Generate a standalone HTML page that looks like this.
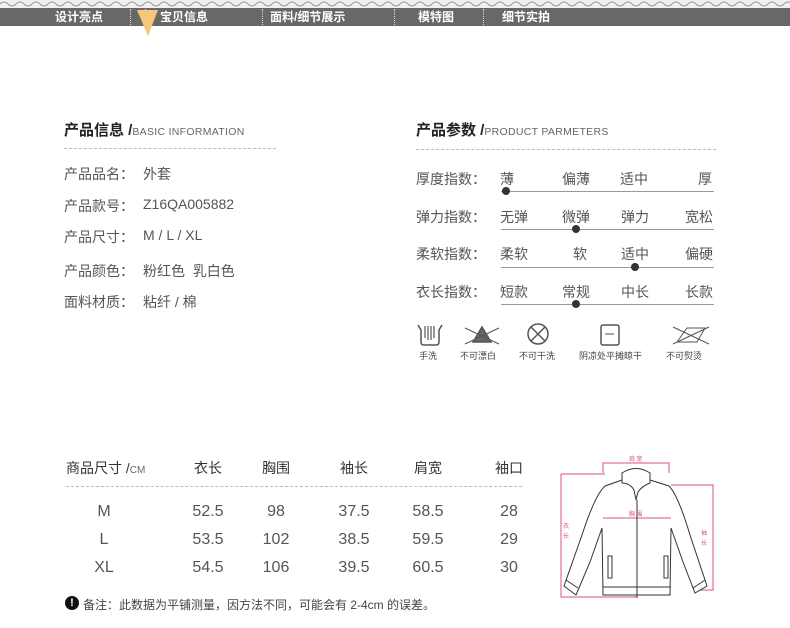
<!DOCTYPE html>
<html><head><meta charset="utf-8"><style>
*{margin:0;padding:0;box-sizing:border-box}
body{width:790px;height:628px;background:#fff;position:relative;overflow:hidden;font-family:"Liberation Sans","Noto Sans CJK SC",sans-serif;color:#555}
.a{position:absolute;white-space:nowrap}
.nav{position:absolute;top:8px;left:0;width:790px;height:18px;background:#686868}
.nav span{position:absolute;top:1px;color:#fff;font-size:12px;font-weight:bold;line-height:16px}
.sep{position:absolute;top:9px;width:0;height:16px;border-left:1px dotted #ddd}
.h{font-size:15px;font-weight:bold;color:#222}
.h small{font-size:10.5px;font-weight:normal;color:#666;letter-spacing:.3px}
.dash{position:absolute;height:0;border-top:1px dashed #bbb}
.r{font-size:14px;color:#555}
.pl{position:absolute;height:1px;background:#999}
.dot{position:absolute;width:8px;height:8px;border-radius:50%;background:#333}
.ic{font-size:9px;color:#444}
.t{font-size:14px;color:#333;text-align:center;width:60px}
.d{font-size:16px;color:#555;text-align:center;width:60px}
</style></head><body>
<svg class="a" style="left:0;top:0" width="790" height="8"><rect width="790" height="8" fill="#f0f0f0"/><g fill="none" stroke="#999" stroke-width="1"><path d="M0 4 Q4 0 8 4 T16 4 T24 4 T32 4 T40 4 T48 4 T56 4 T64 4 T72 4 T80 4 T88 4 T96 4 T104 4 T112 4 T120 4 T128 4 T136 4 T144 4 T152 4 T160 4 T168 4 T176 4 T184 4 T192 4 T200 4 T208 4 T216 4 T224 4 T232 4 T240 4 T248 4 T256 4 T264 4 T272 4 T280 4 T288 4 T296 4 T304 4 T312 4 T320 4 T328 4 T336 4 T344 4 T352 4 T360 4 T368 4 T376 4 T384 4 T392 4 T400 4 T408 4 T416 4 T424 4 T432 4 T440 4 T448 4 T456 4 T464 4 T472 4 T480 4 T488 4 T496 4 T504 4 T512 4 T520 4 T528 4 T536 4 T544 4 T552 4 T560 4 T568 4 T576 4 T584 4 T592 4 T600 4 T608 4 T616 4 T624 4 T632 4 T640 4 T648 4 T656 4 T664 4 T672 4 T680 4 T688 4 T696 4 T704 4 T712 4 T720 4 T728 4 T736 4 T744 4 T752 4 T760 4 T768 4 T776 4 T784 4 T792 4"/></g></svg>
<div class="nav">
<span style="left:55px">设计亮点</span><span style="left:160px">宝贝信息</span><span style="left:270px">面料/细节展示</span><span style="left:418px">模特图</span><span style="left:502px">细节实拍</span>
</div>
<div class="sep" style="left:130px"></div><div class="sep" style="left:145px"></div><div class="sep" style="left:262px"></div><div class="sep" style="left:394px"></div><div class="sep" style="left:483px"></div>
<svg class="a" style="left:137px;top:10px" width="22" height="26"><polygon points="0,0 21,0 11,26" fill="#f5c77a"/></svg>

<div class="a h" style="left:64px;top:119px">产品信息 /<small>BASIC INFORMATION</small></div>
<div class="dash" style="left:64px;top:148px;width:212px"></div>
<div class="a r" style="left:64px;top:164px">产品品名：</div><div class="a r" style="left:143px;top:164px">外套</div>
<div class="a r" style="left:64px;top:196px">产品款号：</div><div class="a r" style="left:143px;top:196px">Z16QA005882</div>
<div class="a r" style="left:64px;top:227px">产品尺寸：</div><div class="a r" style="left:143px;top:227px">M / L / XL</div>
<div class="a r" style="left:64px;top:261px">产品颜色：</div><div class="a r" style="left:143px;top:261px">粉红色&nbsp;&nbsp;乳白色</div>
<div class="a r" style="left:64px;top:292px">面料材质：</div><div class="a r" style="left:143px;top:292px">粘纤 / 棉</div>

<div class="a h" style="left:416px;top:119px">产品参数 /<small>PRODUCT PARMETERS</small></div>
<div class="dash" style="left:416px;top:149px;width:300px"></div>
<div class="a r" style="left:416px;top:169px">厚度指数：</div>
<div class="a r" style="left:500px;top:169px">薄</div><div class="a r" style="left:562px;top:169px">偏薄</div><div class="a r" style="left:620px;top:169px">适中</div><div class="a r" style="left:698px;top:169px">厚</div>
<div class="pl" style="left:501px;top:191px;width:213px"></div><div class="dot" style="left:502px;top:187px"></div>
<div class="a r" style="left:416px;top:207px">弹力指数：</div>
<div class="a r" style="left:500px;top:207px">无弹</div><div class="a r" style="left:562px;top:207px">微弹</div><div class="a r" style="left:621px;top:207px">弹力</div><div class="a r" style="left:685px;top:207px">宽松</div>
<div class="pl" style="left:501px;top:229px;width:213px"></div><div class="dot" style="left:572px;top:225px"></div>
<div class="a r" style="left:416px;top:244px">柔软指数：</div>
<div class="a r" style="left:500px;top:244px">柔软</div><div class="a r" style="left:573px;top:244px">软</div><div class="a r" style="left:621px;top:244px">适中</div><div class="a r" style="left:685px;top:244px">偏硬</div>
<div class="pl" style="left:501px;top:267px;width:213px"></div><div class="dot" style="left:631px;top:263px"></div>
<div class="a r" style="left:416px;top:282px">衣长指数：</div>
<div class="a r" style="left:500px;top:282px">短款</div><div class="a r" style="left:562px;top:282px">常规</div><div class="a r" style="left:621px;top:282px">中长</div><div class="a r" style="left:685px;top:282px">长款</div>
<div class="pl" style="left:501px;top:304px;width:213px"></div><div class="dot" style="left:572px;top:300px"></div>

<svg class="a" style="left:415px;top:322px" width="300" height="26" fill="none" stroke="#555" stroke-width="1.5">
<path d="M3 3 L6 8 L6 20 Q6 23 9 23 L21 23 Q24 23 24 20 L24 8 L27 3"/><path d="M10 4 L10 16 M13 4 L13 18 M16 4 L16 18 M19 4 L19 16" stroke-width="1.2"/>
<path d="M58 20 L67 5 L76 20 Z" fill="#666"/><path d="M50 6 L84 22 M50 22 L84 6" stroke-width="1"/>
<circle cx="123" cy="12" r="10"/><path d="M116 5 L130 19 M130 5 L116 19"/>
<rect x="186" y="3" width="18" height="20" rx="2"/><path d="M190 12 L199 12" stroke-width="1"/>
<path d="M262 20 L272 6 L290 6 L282 20 Z" stroke-width="1"/><path d="M258 5 L294 22 M258 22 L294 5" stroke-width="1"/>
</svg>
<div class="a ic" style="left:419px;top:349px">手洗</div>
<div class="a ic" style="left:460px;top:349px">不可漂白</div>
<div class="a ic" style="left:519px;top:349px">不可干洗</div>
<div class="a ic" style="left:579px;top:349px">阴凉处平摊晾干</div>
<div class="a ic" style="left:666px;top:349px">不可熨烫</div>

<div class="a" style="left:66px;top:458px;font-size:14px;color:#333">商品尺寸 /<span style="font-size:10px;color:#666">CM</span></div>
<div class="a t" style="left:178px;top:458px">衣长</div><div class="a t" style="left:246px;top:458px">胸围</div><div class="a t" style="left:324px;top:458px">袖长</div><div class="a t" style="left:398px;top:458px">肩宽</div><div class="a t" style="left:479px;top:458px">袖口</div>
<div class="dash" style="left:66px;top:486px;width:456px"></div>
<div class="a d" style="left:74px;top:503px">M</div><div class="a d" style="left:178px;top:503px">52.5</div><div class="a d" style="left:246px;top:503px">98</div><div class="a d" style="left:324px;top:503px">37.5</div><div class="a d" style="left:398px;top:503px">58.5</div><div class="a d" style="left:479px;top:503px">28</div>
<div class="a d" style="left:74px;top:531px">L</div><div class="a d" style="left:178px;top:531px">53.5</div><div class="a d" style="left:246px;top:531px">102</div><div class="a d" style="left:324px;top:531px">38.5</div><div class="a d" style="left:398px;top:531px">59.5</div><div class="a d" style="left:479px;top:531px">29</div>
<div class="a d" style="left:74px;top:559px">XL</div><div class="a d" style="left:178px;top:559px">54.5</div><div class="a d" style="left:246px;top:559px">106</div><div class="a d" style="left:324px;top:559px">39.5</div><div class="a d" style="left:398px;top:559px">60.5</div><div class="a d" style="left:479px;top:559px">30</div>
<div class="a" style="left:65px;top:596px;width:14px;height:14px;border-radius:50%;background:#111;color:#fff;font-size:11px;font-weight:bold;text-align:center;line-height:14px">!</div>
<div class="a" style="left:83px;top:596px;font-size:12px;color:#444">备注：此数据为平铺测量，因方法不同，可能会有 2-4cm 的误差。</div>

<svg class="a" style="left:550px;top:440px" width="180" height="170" fill="none">
<g stroke="#d9557a" stroke-width="1"><path d="M53 33 L53 23 L119 23 L119 33"/><path d="M11 34 L11 157 L87 157"/><path d="M11 34 L55 34"/><path d="M121 45 L163 45 L163 150 L150 150"/><path d="M53 78 L121 78"/></g>
<g fill="#d9557a" font-size="6" font-family="Noto Sans CJK SC,sans-serif" stroke="none"><text x="79" y="21">肩 宽</text><text x="79" y="76">胸 围</text><text x="13" y="88">衣</text><text x="13" y="98">长</text><text x="151" y="95">袖</text><text x="151" y="105">长</text></g>
<g stroke="#333" stroke-width="1"><path d="M72 33 Q86 24 100 33 L100 43 Q92 46 88 52 L86 60 L84 50 Q80 43 72 43 Z"/><path d="M72 40 L55 46 Q45 55 32 95 L14 146 L26 155 L40 122 L52 88 L53 155 L120 155 L121 88 L133 122 L145 153 L157 146 L140 95 Q128 55 119 46 L100 40"/><path d="M87 60 L87 158"/><path d="M16 140 L28 148 M143 148 L155 140"/><rect x="58" y="116" width="4" height="22"/><rect x="114" y="116" width="4" height="22"/><path d="M53 147 L121 147"/></g>
</svg>
</body></html>
